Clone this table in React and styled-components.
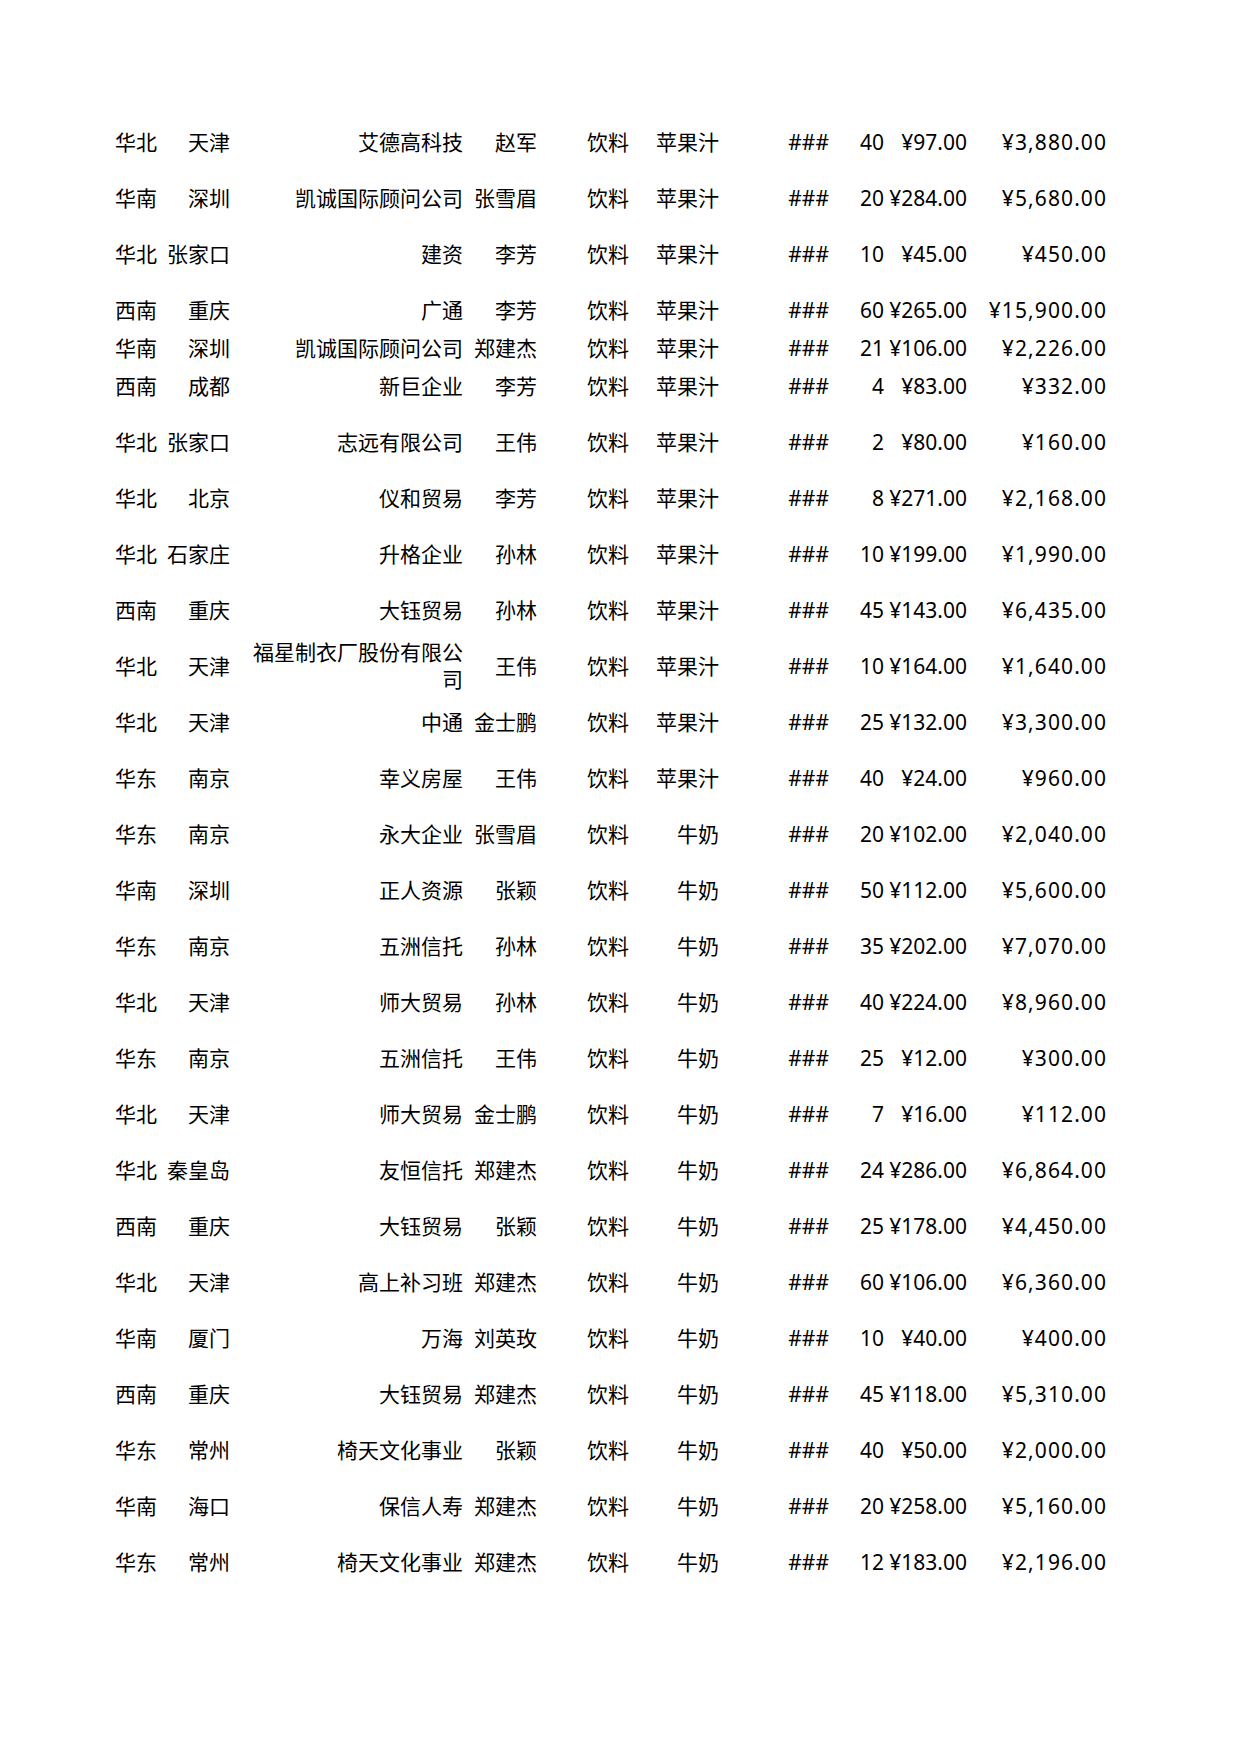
import React from "react";
import styled, { createGlobalStyle } from "styled-components";

const Global = createGlobalStyle`
  html, body { margin: 0; padding: 0; background: #fff; }
  body {
    font-family: "Noto Sans", "Noto Sans CJK SC", sans-serif;
    color: #000;
  }
`;

const Page = styled.div`
  width: 1240px;
  min-height: 1754px;
  box-sizing: border-box;
  padding: 100px 0 0 115px;
  background: #fff;
`;

const Sheet = styled.div`
  display: flex;
  flex-direction: column;
`;

const Row = styled.div`
  display: grid;
  grid-template-columns: 50px 65px 233px 74px 112px 70px 110px 55px 83px 139px;
  height: ${(p) => (p.$short ? 38 : 56)}px;
`;

const Cell = styled.div`
  display: flex;
  flex-direction: column;
  justify-content: flex-end;
  padding-left: ${(p) => p.$pl || 0}px;
  min-width: 0;
`;

const Line = styled.div`
  height: 28px;
  display: flex;
  align-items: center;
  justify-content: ${(p) => (p.$left ? "flex-start" : "flex-end")};
  font-size: 21px;
  line-height: 27px;
  white-space: ${(p) => (p.$wrap ? "normal" : "nowrap")};
  text-align: ${(p) => (p.$left ? "left" : "right")};
  color: #000;
`;

const TotalLine = styled(Line)`
  letter-spacing: 1.1px;
  margin-right: -1.1px;
`;

const rows = [
  ["华北", "天津", "艾德高科技", "赵军", "苹果汁", "40", "¥97.00", "¥3,880.00"],
  ["华南", "深圳", "凯诚国际顾问公司", "张雪眉", "苹果汁", "20", "¥284.00", "¥5,680.00"],
  ["华北", "张家口", "建资", "李芳", "苹果汁", "10", "¥45.00", "¥450.00"],
  ["西南", "重庆", "广通", "李芳", "苹果汁", "60", "¥265.00", "¥15,900.00"],
  ["华南", "深圳", "凯诚国际顾问公司", "郑建杰", "苹果汁", "21", "¥106.00", "¥2,226.00", true],
  ["西南", "成都", "新巨企业", "李芳", "苹果汁", "4", "¥83.00", "¥332.00", true],
  ["华北", "张家口", "志远有限公司", "王伟", "苹果汁", "2", "¥80.00", "¥160.00"],
  ["华北", "北京", "仪和贸易", "李芳", "苹果汁", "8", "¥271.00", "¥2,168.00"],
  ["华北", "石家庄", "升格企业", "孙林", "苹果汁", "10", "¥199.00", "¥1,990.00"],
  ["西南", "重庆", "大钰贸易", "孙林", "苹果汁", "45", "¥143.00", "¥6,435.00"],
  ["华北", "天津", "福星制衣厂股份有限公司", "王伟", "苹果汁", "10", "¥164.00", "¥1,640.00"],
  ["华北", "天津", "中通", "金士鹏", "苹果汁", "25", "¥132.00", "¥3,300.00"],
  ["华东", "南京", "幸义房屋", "王伟", "苹果汁", "40", "¥24.00", "¥960.00"],
  ["华东", "南京", "永大企业", "张雪眉", "牛奶", "20", "¥102.00", "¥2,040.00"],
  ["华南", "深圳", "正人资源", "张颖", "牛奶", "50", "¥112.00", "¥5,600.00"],
  ["华东", "南京", "五洲信托", "孙林", "牛奶", "35", "¥202.00", "¥7,070.00"],
  ["华北", "天津", "师大贸易", "孙林", "牛奶", "40", "¥224.00", "¥8,960.00"],
  ["华东", "南京", "五洲信托", "王伟", "牛奶", "25", "¥12.00", "¥300.00"],
  ["华北", "天津", "师大贸易", "金士鹏", "牛奶", "7", "¥16.00", "¥112.00"],
  ["华北", "秦皇岛", "友恒信托", "郑建杰", "牛奶", "24", "¥286.00", "¥6,864.00"],
  ["西南", "重庆", "大钰贸易", "张颖", "牛奶", "25", "¥178.00", "¥4,450.00"],
  ["华北", "天津", "高上补习班", "郑建杰", "牛奶", "60", "¥106.00", "¥6,360.00"],
  ["华南", "厦门", "万海", "刘英玫", "牛奶", "10", "¥40.00", "¥400.00"],
  ["西南", "重庆", "大钰贸易", "郑建杰", "牛奶", "45", "¥118.00", "¥5,310.00"],
  ["华东", "常州", "椅天文化事业", "张颖", "牛奶", "40", "¥50.00", "¥2,000.00"],
  ["华南", "海口", "保信人寿", "郑建杰", "牛奶", "20", "¥258.00", "¥5,160.00"],
  ["华东", "常州", "椅天文化事业", "郑建杰", "牛奶", "12", "¥183.00", "¥2,196.00"],
];

export default function App() {
  return (
    <>
      <Global />
      <Page>
        <Sheet>
          {rows.map((r, i) => {
            const [region, city, company, person, product, qty, price, total, short] = r;
            return (
              <Row key={i} $short={short}>
                <Cell><Line $left>{region}</Line></Cell>
                <Cell><Line>{city}</Line></Cell>
                <Cell $pl={12}><Line $wrap>{company}</Line></Cell>
                <Cell><Line>{person}</Line></Cell>
                <Cell $pl={50}><Line $left>饮料</Line></Cell>
                <Cell><Line>{product}</Line></Cell>
                <Cell><Line>###</Line></Cell>
                <Cell><Line>{qty}</Line></Cell>
                <Cell><Line>{price}</Line></Cell>
                <Cell><TotalLine>{total}</TotalLine></Cell>
              </Row>
            );
          })}
        </Sheet>
      </Page>
    </>
  );
}
